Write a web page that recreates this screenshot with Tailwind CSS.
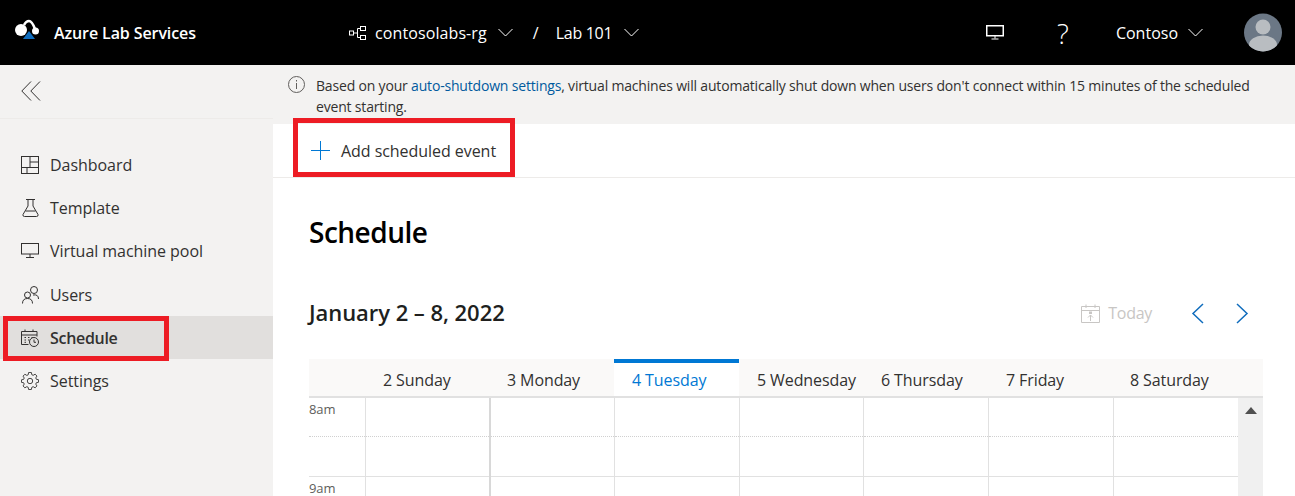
<!doctype html>
<html lang="en">
<head>
<meta charset="utf-8">
<title>Schedule</title>
<script src="https://cdn.jsdelivr.net/npm/@tailwindcss/browser@4"></script>
</head>
<body class="m-0 h-[496px] w-[1295px] overflow-hidden bg-white font-['Open_Sans','Noto_Sans',sans-serif] text-[#323130]">
<header class="flex h-[65px] items-center bg-black text-white">
  <div class="flex w-[348px] items-center pl-[15px]">
    <svg class="mb-[7px] h-[20px] w-[24px]" viewBox="0 0 24 20"><circle cx="6" cy="11" r="6" fill="#fff"/><circle cx="20.500" cy="12" r="3.500" fill="#fff"/><path d="M9 6Q11 2 14 2Q17 2 20 10" fill="none" stroke="#fff" stroke-width="2.500"/><path d="M14 12L20 20H8Z" fill="#0f6cbd"/></svg>
    <span class="ml-[15px] mt-[1px] text-[16px] font-semibold tracking-[-0.1px]">Azure Lab Services</span>
  </div>
  <div class="flex items-center text-[16px] tracking-[0.1px]">
    <svg class="mr-[8px] h-[16px] w-[19px]" viewBox="0 0 19 16" fill="none" stroke="#fff"><rect x="12.500" y="1.500" width="5" height="4"/><rect x="12.500" y="10.500" width="5" height="4"/><rect x="1.500" y="6" width="4" height="4"/><path d="M5.500 8H9.500M9.500 3.500V12.500M9.500 3.500H12.500M9.500 12.500H12.500"/></svg>
    <span class="mt-[1px]">contosolabs-rg</span>
    <svg class="ml-[11px] h-[9px] w-[15px]" viewBox="0 0 15 9" fill="none" stroke="#fff"><path d="M.5 1l7 7 7-7"/></svg>
    <span class="ml-[20px] mt-[1px]">/</span>
    <span class="ml-[17px] mt-[1px] tracking-[-0.3px]">Lab 101</span>
    <svg class="ml-[12px] h-[9px] w-[15px]" viewBox="0 0 15 9" fill="none" stroke="#fff"><path d="M.5 1l7 7 7-7"/></svg>
  </div>
  <div class="ml-auto flex items-center">
    <svg class="h-[15px] w-[18px]" viewBox="0 0 18 15" fill="none" stroke="#fff"><rect x=".75" y=".75" width="16.500" height="10" stroke-width="1.500"/><path d="M9 11v2.500M5.500 14h7"/></svg>
    <span class="ml-[53px] w-[14px] text-[28px] font-light leading-none">?</span>
    <span class="ml-[45px] mt-[1px] text-[16px]">Contoso</span>
    <svg class="ml-[10px] h-[9px] w-[15px]" viewBox="0 0 15 9" fill="none" stroke="#fff"><path d="M.5 1l7 7 7-7"/></svg>
    <svg class="ml-[41px] mr-[13px] h-[39px] w-[38px]" viewBox="0 0 38 39"><defs><clipPath id="avatar"><circle cx="19" cy="19.500" r="19"/></clipPath></defs><circle cx="19" cy="19.500" r="19" fill="#6b7785"/><g clip-path="url(#avatar)" fill="#b9bdc1"><circle cx="19" cy="14" r="7.500"/><ellipse cx="19" cy="32" rx="14" ry="9.500"/></g></svg>
  </div>
</header>
<div class="flex h-[431px]">
  <aside class="w-[273px] shrink-0 bg-[#f3f2f1]">
    <div class="flex h-[54px] items-center border-b border-[#edebe9] pl-[21px]">
      <svg class="mb-[2px] h-[20px] w-[20px]" viewBox="0 0 20 20" fill="none" stroke="#323130"><path d="M10 .5L.8 10l9.200 9.500M19 .5L9.800 10l9.200 9.500"/></svg>
    </div>
    <nav class="pt-[24px] text-[16px] tracking-[-0.05px]">
      <a class="flex h-[43.3px] items-center pl-[21px]"><svg class="mr-[11px] h-[18px] w-[18px]" viewBox="0 0 18 18" fill="none" stroke="#323130"><rect x=".5" y=".5" width="17" height="17"/><path d="M.5 11.500H17.500M9 .5V11.500M9 6H17.500M6 11.500V17.500"/></svg>Dashboard</a>
      <a class="flex h-[43.3px] items-center pl-[22px]"><svg class="mr-[11px] h-[18px] w-[17px]" viewBox="0 0 17 18" fill="none" stroke="#323130"><path d="M4 .5H13M6 .5V7L1 15.500Q.5 17.500 2.500 17.500H14.500Q16.500 17.500 16 15.500L11 7V.5M3.500 12H13.500"/></svg>Template</a>
      <a class="flex h-[43.3px] items-center pl-[21px]"><svg class="mb-[2px] mr-[11px] h-[15px] w-[18px]" viewBox="0 0 18 15" fill="none" stroke="#323130"><rect x=".5" y=".5" width="17" height="10.500"/><path d="M9 11v3M5 14.500h8"/></svg>Virtual machine pool</a>
      <a class="flex h-[43.3px] items-center pl-[22px]"><svg class="mr-[11px] h-[18px] w-[17px]" viewBox="0 0 17 18" fill="none" stroke="#323130"><circle cx="5.500" cy="9" r="3"/><path d="M.5 17.500Q.5 12.500 5.500 12.500T10.500 17.500"/><circle cx="12" cy="4" r="3.500"/><path d="M11 9Q16.500 8 16.500 13"/></svg>Users</a>
      <a class="relative flex h-[43.3px] items-center bg-[#e1dfdd] pl-[21px] font-semibold tracking-[-0.3px]"><svg class="mr-[11px] h-[18px] w-[18px]" viewBox="0 0 18 18" fill="none" stroke="#323130"><path d="M7.500 15.500H.5V2.500H16V7.500M.5 6H16M4 .5V3M12 .5V3"/><path d="M3.500 8.500H5M7 8.500H8.500M10.500 8.500H12M3.500 11H5M7 11H8.500M3.500 13.300H5"/><circle cx="13" cy="13" r="4.500" fill="#e1dfdd"/><path d="M13 10.500V13.300H15"/></svg>Schedule<span class="absolute left-[3px] top-0 h-[45px] w-[166px] border-[5px] border-[#ed1c24]"></span></a>
      <a class="flex h-[43.3px] items-center pl-[21px]"><svg class="mr-[11px] h-[18px] w-[18px]" viewBox="0 0 20 20" fill="none" stroke="#323130"><circle cx="10" cy="10" r="3"/><path d="M8.500.5h3l.5 2.500 1.500.7 2.200-1.300 2 2.100-1.300 2.100.7 1.500 2.400.5v2.800l-2.400.5-.7 1.500 1.300 2.100-2 2.100-2.200-1.300-1.500.7-.5 2.500h-3l-.5-2.500-1.500-.7-2.200 1.300-2-2.100 1.300-2.100-.7-1.500L.5 11.500V8.700l2.400-.5.700-1.500-1.300-2.100 2-2.100 2.200 1.300 1.500-.7z"/></svg>Settings</a>
    </nav>
  </aside>
  <main class="min-w-0 flex-1">
    <div class="flex h-[59px] bg-[#f3f2f1] pl-[15px] pt-[10px] text-[14px] leading-[21px] tracking-[-0.18px]">
      <svg class="mr-[11px] mt-[1px] h-[17px] w-[17px] shrink-0" viewBox="0 0 17 17" fill="none" stroke="#605e5c"><circle cx="8.500" cy="8.500" r="8"/><path d="M8.500 7V13M8.500 4V5.500"/></svg>
      <p class="w-[945px]">Based on your <a class="text-[#005a9e]">auto-shutdown settings</a>, virtual machines will automatically shut down when users don't connect within 15 minutes of the scheduled event starting.</p>
    </div>
    <div class="relative flex h-[54px] items-center border-b border-[#edebe9] pl-[38px] text-[16px] tracking-[-0.05px]">
      <svg class="mr-[11px] h-[19px] w-[19px]" viewBox="0 0 19 19" fill="none" stroke="#0078d4"><path d="M0 9.500H19M9.500 0V19"/></svg>
      Add scheduled event
      <span class="absolute left-[20px] top-[-6px] h-[59px] w-[222px] border-[5px] border-[#ed1c24]"></span>
    </div>
    <section class="pl-[36px]">
      <h1 class="mt-[34px] text-[28px] font-semibold leading-[40px] tracking-[-0.5px] text-black">Schedule</h1>
      <div class="mt-[41px] flex h-[40px] w-[954px] items-center">
        <h2 class="mb-[2px] text-[22px] font-semibold tracking-[-0.05px] text-[#201f1e]">January 2 – 8, 2022</h2>
        <svg class="ml-auto h-[19px] w-[19px]" viewBox="0 0 19 19" fill="none" stroke="#c8c6c4"><path d="M.5 2.500H18.500V18.500H.5ZM.5 6.500H18.500M5 .5V4M14 .5V4M9.500 17V11M7 13.500L9.500 11L12 13.500"/><rect x="8.500" y="8" width="2" height="1.500" fill="#c8c6c4"/></svg>
        <span class="ml-[8px] text-[16px] tracking-[-0.3px] text-[#c8c6c4]">Today</span>
        <svg class="ml-[39px] h-[21px] w-[13px]" viewBox="0 0 13 21" fill="none" stroke="#0f6cbd" stroke-width="1.500"><path d="M12 1L2 10.500L12 20"/></svg>
        <svg class="ml-[32px] mr-[14px] h-[21px] w-[13px]" viewBox="0 0 13 21" fill="none" stroke="#0f6cbd" stroke-width="1.500"><path d="M1 1L11 10.500L1 20"/></svg>
      </div>
      <div class="mt-[26px] w-[954px] text-[16px] tracking-[-0.1px]">
        <div class="grid h-[39px] grid-cols-[56px_125px_124px_125px_124px_125px_125px_125px_25px] border-b-2 border-[#e1e1e1] bg-[#faf9f8]">
          <span></span>
          <span class="flex items-center border-t-[4px] border-transparent pl-[18px]">2 Sunday</span>
          <span class="flex items-center border-t-[4px] border-transparent pl-[17px]">3 Monday</span>
          <span class="flex items-center border-t-[4px] border-[#0078d4] bg-white pl-[18px] text-[#0078d4]">4 Tuesday</span>
          <span class="flex items-center border-t-[4px] border-transparent pl-[18px]">5 Wednesday</span>
          <span class="flex items-center border-t-[4px] border-transparent pl-[18px]">6 Thursday</span>
          <span class="flex items-center border-t-[4px] border-transparent pl-[18px]">7 Friday</span>
          <span class="flex items-center border-t-[4px] border-transparent pl-[17px]">8 Saturday</span>
          <span></span>
        </div>
        <div class="grid h-[100px] grid-cols-[56px_124px_125px_125px_124px_125px_125px_125px_25px] text-[13px]">
          <div class="relative h-full bg-[linear-gradient(#e1e1e1,#e1e1e1)] bg-[length:100%_1px] bg-[position:0_78px] bg-no-repeat text-[#605e5c]">
            <div class="mt-[38px] border-t border-dotted border-[#d0d0d0]"></div>
            <span class="absolute left-0 top-[2px]">8am</span>
            <span class="absolute left-0 top-[81px]">9am</span>
          </div>
          <div class="h-full border-l border-[#e1e1e1] bg-[linear-gradient(#e1e1e1,#e1e1e1)] bg-[length:100%_1px] bg-[position:0_78px] bg-no-repeat"><div class="mt-[38px] border-t border-dotted border-[#d0d0d0]"></div></div>
          <div class="h-full border-l-2 border-[#d8d8d8] bg-[linear-gradient(#e1e1e1,#e1e1e1)] bg-[length:100%_1px] bg-[position:0_78px] bg-no-repeat"><div class="mt-[38px] border-t border-dotted border-[#d0d0d0]"></div></div>
          <div class="h-full border-l border-[#e1e1e1] bg-[linear-gradient(#e1e1e1,#e1e1e1)] bg-[length:100%_1px] bg-[position:0_78px] bg-no-repeat"><div class="mt-[38px] border-t border-dotted border-[#d0d0d0]"></div></div>
          <div class="h-full border-l border-[#e1e1e1] bg-[linear-gradient(#e1e1e1,#e1e1e1)] bg-[length:100%_1px] bg-[position:0_78px] bg-no-repeat"><div class="mt-[38px] border-t border-dotted border-[#d0d0d0]"></div></div>
          <div class="h-full border-l border-[#e1e1e1] bg-[linear-gradient(#e1e1e1,#e1e1e1)] bg-[length:100%_1px] bg-[position:0_78px] bg-no-repeat"><div class="mt-[38px] border-t border-dotted border-[#d0d0d0]"></div></div>
          <div class="h-full border-l border-[#e1e1e1] bg-[linear-gradient(#e1e1e1,#e1e1e1)] bg-[length:100%_1px] bg-[position:0_78px] bg-no-repeat"><div class="mt-[38px] border-t border-dotted border-[#d0d0d0]"></div></div>
          <div class="h-full border-l border-[#e1e1e1] bg-[linear-gradient(#e1e1e1,#e1e1e1)] bg-[length:100%_1px] bg-[position:0_78px] bg-no-repeat"><div class="mt-[38px] border-t border-dotted border-[#d0d0d0]"></div></div>
          <div class="flex h-full justify-center bg-[#f0f0f0] pt-[9px]"><svg class="h-[7px] w-[12px]" viewBox="0 0 12 7"><path d="M6 0L12 7H0Z" fill="#505050"/></svg></div>
        </div>
      </div>
    </section>
  </main>
</div>
</body>
</html>
